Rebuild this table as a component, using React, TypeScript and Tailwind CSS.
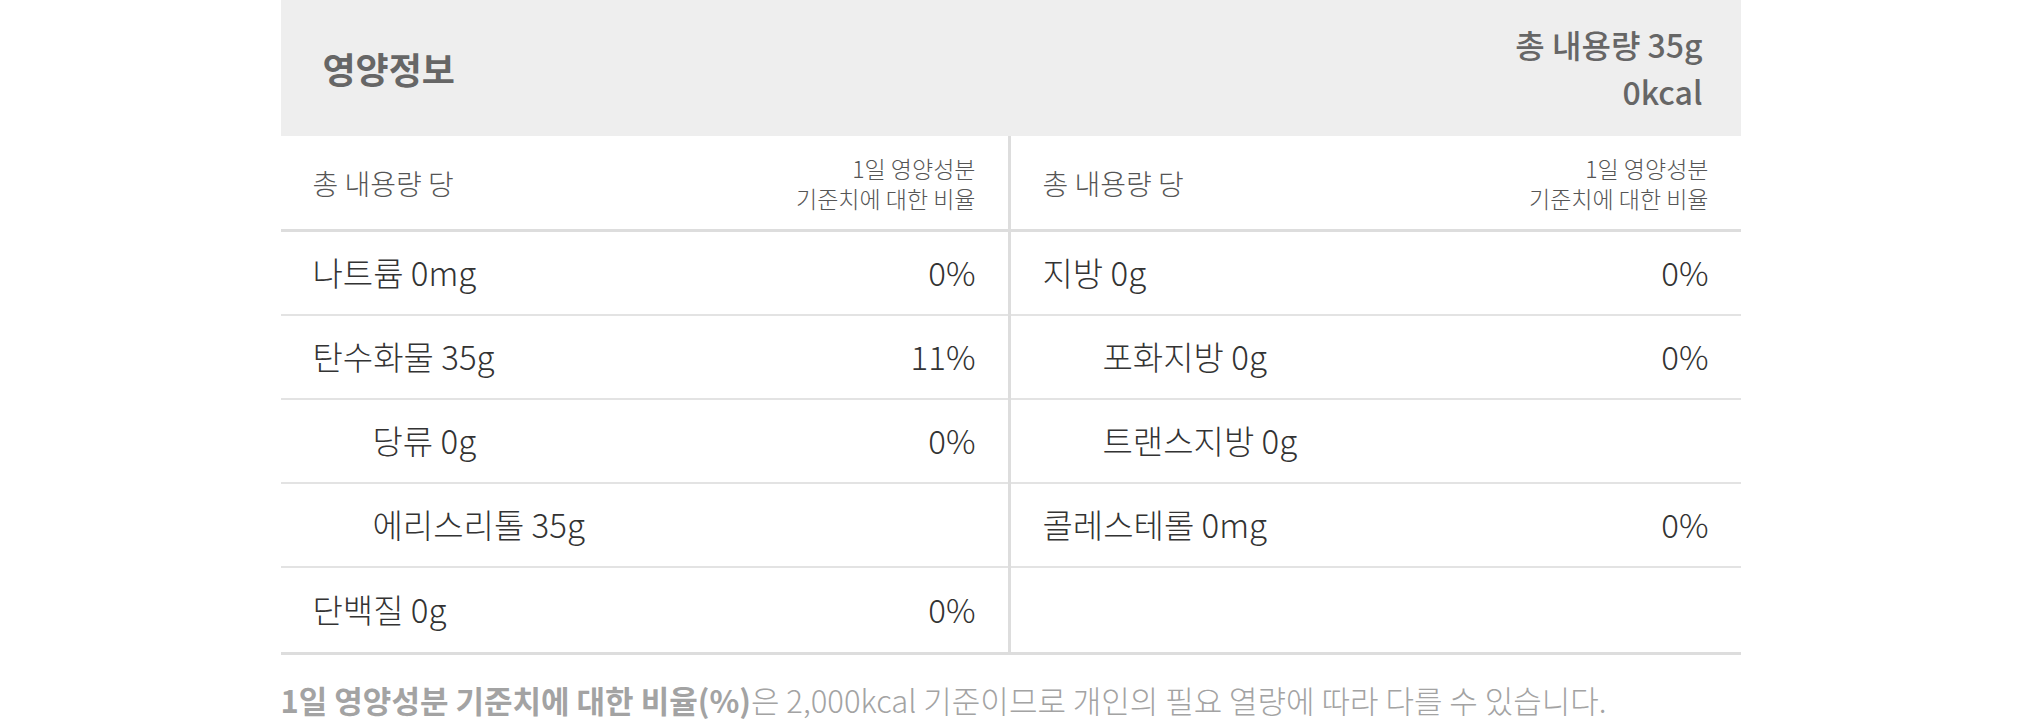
const leftRows = [
  { label: "나트륨 0mg", value: "0%" },
  { label: "탄수화물 35g", value: "11%" },
  { label: "당류 0g", value: "0%", sub: true },
  { label: "에리스리톨 35g", value: "", sub: true },
  { label: "단백질 0g", value: "0%" },
]

const rightRows = [
  { label: "지방 0g", value: "0%" },
  { label: "포화지방 0g", value: "0%", sub: true },
  { label: "트랜스지방 0g", value: "", sub: true },
  { label: "콜레스테롤 0mg", value: "0%" },
  { label: "", value: "" },
]

type Row = { label: string; value: string; sub?: boolean }

function Column({ rows, divider }: { rows: Row[]; divider?: boolean }) {
  return (
    <div className={divider ? "flex flex-col border-r-[3px] border-[#dddddd]" : "flex flex-col"}>
      <div className="flex h-[96px] items-center justify-between border-b-[3px] border-[#dddddd] px-8 text-[#555555]">
        <span className="text-[28px] font-light">총 내용량 당</span>
        <span className="text-right text-[23px] font-light leading-[30px]">
          1일 영양성분
          <br />
          기준치에 대한 비율
        </span>
      </div>
      {rows.map((row, i) => (
        <div
          key={i}
          className={
            i < rows.length - 1
              ? "flex h-[84px] items-center justify-between border-b-2 border-[#e3e3e3] px-8 text-[33px] font-light text-[#333333]"
              : "flex h-[84px] items-center justify-between px-8 text-[33px] font-light text-[#333333]"
          }
        >
          <span className={row.sub ? "pl-[60px]" : ""}>{row.label}</span>
          <span>{row.value}</span>
        </div>
      ))}
    </div>
  )
}

export default function App() {
  return (
    <div
      className="min-h-[725px] bg-white"
      style={{ fontFamily: '"Noto Sans CJK KR", "Noto Sans", sans-serif' }}
    >
      <div className="mx-auto w-[1460px]">
        <div className="flex h-[136px] items-center justify-between bg-[#eeeeee] pl-[42px] pr-[38px] text-[#666666]">
          <h2 className="text-[36px] font-bold">영양정보</h2>
          <div className="text-right text-[32px] font-medium leading-[47px]">
            <p>총 내용량 35g</p>
            <p>0kcal</p>
          </div>
        </div>
        <div className="grid grid-cols-2 border-b-[3px] border-[#dddddd]">
          <Column rows={leftRows} divider />
          <Column rows={rightRows} />
        </div>
        <p className="mt-[22px] text-[31px] font-light text-[#a3a3a3]">
          <span className="font-bold">1일 영양성분 기준치에 대한 비율(%)</span>은 2,000kcal 기준이므로 개인의 필요 열량에 따라 다를 수 있습니다.
        </p>
      </div>
    </div>
  )
}
